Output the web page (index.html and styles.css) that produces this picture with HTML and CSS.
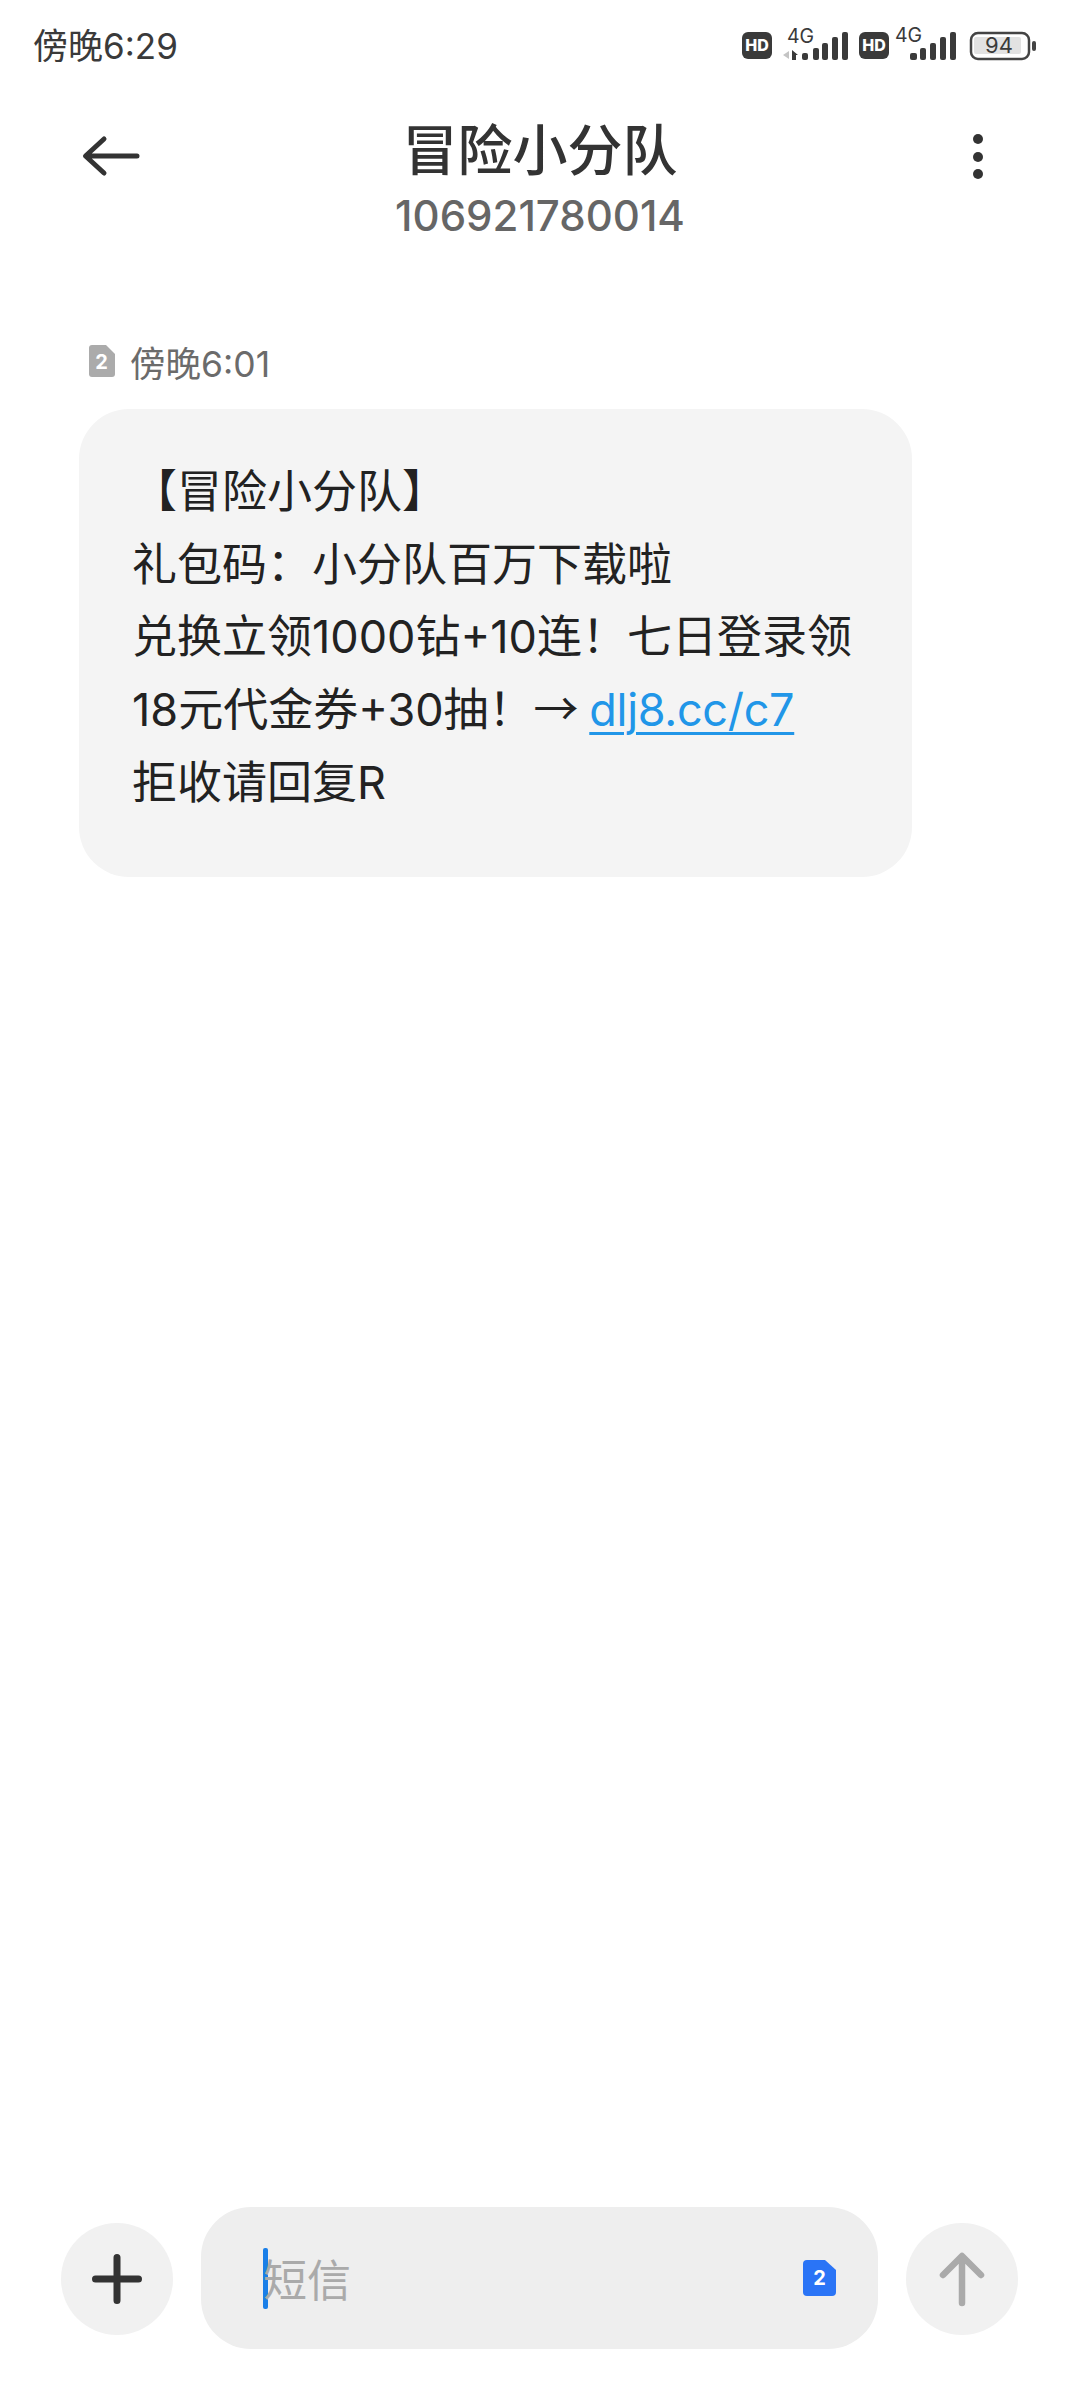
FILE: index.html
```html
<!DOCTYPE html>
<html lang="zh-CN">
<head>
<meta charset="utf-8">
<title>冒险小分队</title>
<link rel="stylesheet" href="styles.css">
</head>
<body>
<div class="screen">
  <div class="status">
    <span class="time">傍晚6:29</span>
    <svg class="status-icons" width="292" height="42" viewBox="0 0 292 42">
      <rect x="0" y="6" width="30" height="27" rx="6" fill="#3a3a3a"/>
      <text x="15" y="25" class="hd" text-anchor="middle">HD</text>
      <text x="45" y="17" class="net">4G</text>
      <path d="M47 33v-8l-6 4z" fill="#c4c4c4"/>
      <path d="M50 34v-10l6 5h-2v5z" fill="#3a3a3a"/>
      <g fill="#3a3a3a">
        <rect x="60" y="27" width="6" height="7" rx="2"/>
        <rect x="71" y="22" width="6" height="12" rx="2"/>
        <rect x="80" y="17" width="6" height="17" rx="2"/>
        <rect x="90" y="11" width="6" height="23" rx="2"/>
        <rect x="100" y="6" width="6" height="28" rx="2"/>
      </g>
      <rect x="117" y="6" width="30" height="27" rx="6" fill="#3a3a3a"/>
      <text x="132" y="25" class="hd" text-anchor="middle">HD</text>
      <text x="153" y="16" class="net">4G</text>
      <g fill="#3a3a3a">
        <rect x="168" y="27" width="7" height="7" rx="2"/>
        <rect x="178" y="22" width="6" height="12" rx="2"/>
        <rect x="188" y="17" width="6" height="17" rx="2"/>
        <rect x="198" y="11" width="6" height="23" rx="2"/>
        <rect x="208" y="6" width="6" height="28" rx="2"/>
      </g>
      <rect x="229" y="7" width="58" height="26" rx="7" fill="none" stroke="#444" stroke-width="2.500"/>
      <rect x="232" y="11" width="47" height="17" rx="2" fill="#e2e2e2"/>
      <rect x="290" y="15" width="4" height="10" rx="2" fill="#444"/>
      <text x="257" y="27" class="batt" text-anchor="middle">94</text>
    </svg>
  </div>

  <header class="topbar">
    <div class="side">
      <svg class="back" width="60" height="42" viewBox="0 0 60 42">
        <path d="M54 21H3M21 4 2.500 21 21 38" fill="none" stroke="#333" stroke-width="5" stroke-linecap="round" stroke-linejoin="round"/>
      </svg>
    </div>
    <div class="titles">
      <div class="title">冒险小分队</div>
      <div class="number">106921780014</div>
    </div>
    <div class="side side-end">
      <div class="menu"><i></i><i></i><i></i></div>
    </div>
  </header>

  <main class="thread">
    <div class="meta">
      <svg class="sim" width="28" height="34" viewBox="0 0 28 34">
        <path d="M4 1h14l9 9v20a3 3 0 0 1-3 3H4a3 3 0 0 1-3-3V4a3 3 0 0 1 3-3z" fill="#ababab"/>
        <text x="13.500" y="25" class="sim-n" text-anchor="middle">2</text>
      </svg>
      <span>傍晚6:01</span>
    </div>
    <div class="bubble">
      <p class="line">【冒险小分队】</p>
      <p class="line">礼包码：小分队百万下载啦</p>
      <p class="line">兑换立领1000钻+10连！七日登录领</p>
      <p class="line">18元代金券+30抽！<span class="arrow">→</span> <a class="link">dlj8.cc/c7</a></p>
      <p class="line">拒收请回复R</p>
    </div>
  </main>

  <footer class="composer">
    <div class="round">
      <svg width="50" height="50" viewBox="0 0 50 50">
        <path d="M25 3.500v43M3.500 25h43" stroke="#333" stroke-width="7" stroke-linecap="round"/>
      </svg>
    </div>
    <div class="input">
      <span class="caret"></span>
      <span class="placeholder">短信</span>
      <svg class="sim-blue" width="34" height="38" viewBox="0 0 34 38">
        <path d="M4 1h18l11 10v22a4 4 0 0 1-4 4H4a4 4 0 0 1-4-4V5a4 4 0 0 1 4-4z" fill="#2a74f6"/>
        <text x="16.500" y="26" class="sim-b" text-anchor="middle">2</text>
      </svg>
    </div>
    <div class="round">
      <svg width="50" height="56" viewBox="0 0 50 56">
        <path d="M25 52V6M6 24 25 5l19 19" fill="none" stroke="#aaa" stroke-width="6.500" stroke-linecap="round" stroke-linejoin="round"/>
      </svg>
    </div>
  </footer>
</div>
</body>
</html>
```
FILE: styles.css
```css
* { box-sizing: border-box; }
html, body { margin: 0; padding: 0; background: #fff; }
body { font-family: Inter, "Noto Sans CJK SC", sans-serif; }
.screen { width: 1080px; height: 2401px; display: flex; flex-direction: column; overflow: hidden; }

.status { height: 90px; padding: 21px 46px 0 33px; display: flex; justify-content: space-between; align-items: flex-start; flex: none; }
.time { font-size: 35px; line-height: 50px; color: #3a3a3a; }
.status-icons { margin-top: 5px; overflow: visible; }
.hd { font: 800 16px Inter, sans-serif; fill: #fff; }
.net { font: 400 19.500px Inter, sans-serif; fill: #3a3a3a; }
.batt { font: 400 22px Inter, sans-serif; fill: #3a3a3a; }

.topbar { flex: none; height: 160px; padding: 0 80px; display: flex; align-items: flex-start; }
.side { flex: 1; display: flex; }
.side-end { justify-content: flex-end; }
.back { margin: 45px 0 0 3px; overflow: visible; }
.titles { text-align: center; margin-top: 23px; }
.title { font-size: 55px; line-height: 74px; font-weight: 500; color: #333; }
.number { font-size: 42px; line-height: 58px; color: #666; font-weight: 500; }
.menu { margin: 44px 17px 0 0; display: flex; flex-direction: column; gap: 7.500px; }
.menu i { display: block; width: 10px; height: 10px; border-radius: 50%; background: #333; }

.thread { flex: 1; padding: 86px 0 0 79px; }
.meta { display: flex; align-items: center; gap: 14px; height: 50px; padding-left: 9px; font-size: 35.500px; color: #6b6b6b; }
.sim-n { font: 700 20px Inter, sans-serif; fill: #fff; }
.bubble { margin-top: 23px; width: 833px; height: 468px; padding: 47px 0 0 53px; background: #f4f4f4; border-radius: 50px; }
.line { margin: 0; font-size: 45px; line-height: 72.700px; color: #222; white-space: nowrap; }
.arrow { font-family: "Noto Sans CJK SC", sans-serif; line-height: 0; margin-right: -2px; }
.link { color: #2196e8; text-decoration: underline; text-underline-offset: 6px; text-decoration-thickness: 3px; letter-spacing: -0.300px; }

.composer { flex: none; height: 194px; padding: 0 62px 0 61px; display: flex; gap: 28px; align-items: flex-start; }
.round { width: 112px; height: 112px; margin-top: 16px; border-radius: 50%; background: #f1f1f1; display: flex; align-items: center; justify-content: center; flex: none; }
.input { flex: 1; height: 142px; border-radius: 50px; background: #eee; display: flex; align-items: center; padding: 0 41px 0 62px; }
.caret { width: 5px; height: 61px; border-radius: 2px; background: #1a7fe8; flex: none; margin-right: -5px; }
.placeholder { font-size: 44px; color: #aaa; flex: 1; }
.sim-b { font: 700 20px Inter, sans-serif; fill: #fff; }
```
